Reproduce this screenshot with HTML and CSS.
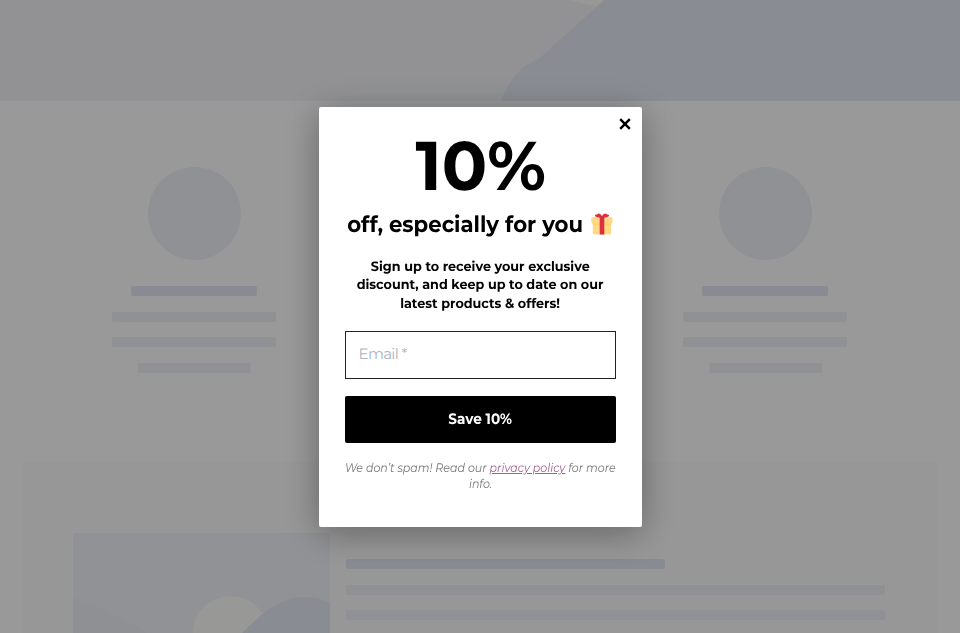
FILE: index.html
```
<!DOCTYPE html>
<html lang="en">
<head>
<meta charset="utf-8">
<title>Newsletter offer</title>
<link rel="stylesheet" href="styles.css">
</head>
<body>
<div class="page">
  <svg class="hero" viewBox="0 0 960 101">
    <path class="sun" d="M570 0H606L597 6Q583 4 570 0Z"/>
    <path class="hill" d="M501 101C506 88 511 79 521 69C526 64 535 62 543 55L604 0H960V101Z"/>
  </svg>
  <div class="features">
    <div class="feature"><i class="avatar"></i><i class="bar title"></i><i class="bar"></i><i class="bar"></i><i class="bar short"></i></div>
    <div class="feature"><i class="avatar"></i><i class="bar title"></i><i class="bar"></i><i class="bar"></i><i class="bar short"></i></div>
    <div class="feature"><i class="avatar"></i><i class="bar title"></i><i class="bar"></i><i class="bar"></i><i class="bar short"></i></div>
  </div>
  <div class="panel">
    <svg class="picture" viewBox="0 0 257 120">
      <path class="slope" d="M0 65C20 70 44 82 73 99L110 120H0Z"/>
      <circle class="sun" cx="157.500" cy="101" r="38"/>
      <path class="hill" d="M150 120L169 100C190 80 206 64 232 64Q246 64 257 70V120Z"/>
    </svg>
    <div class="copy"><i class="bar heading"></i><i class="bar"></i><i class="bar"></i></div>
  </div>
</div>
<div class="overlay">
  <form class="modal">
    <button type="button" class="close" aria-label="Close"><svg viewBox="0 0 12 12"><path d="M1.200 1.200L10.800 10.800M10.800 1.200L1.200 10.800"/></svg></button>
    <h1><span>10%</span></h1>
    <h2><span>off, especially for you</span>
      <svg class="gift" viewBox="0 0 22 22">
        <path fill="#ffd983" d="M1.800 8H20.200V19.500Q20.200 21.500 18.200 21.500H3.800Q1.800 21.500 1.800 19.500Z"/>
        <path fill="#ffcc64" d="M1.800 10H20.200V11.500H1.800Z"/>
        <rect fill="#ffd983" x="0.300" y="4" width="21.400" height="6.500" rx="2"/>
        <path fill="#dd2e44" d="M8.700 4H13.300V21.500H8.700Z"/>
        <path fill="#dd2e44" d="M11 4.800C7 4.800 3.400 4 4 2.200C4.500.8 6 2 6.300 1.200C7-.5 10.300 1 11 3.300C11.700 1 15-.5 15.700 1.200C16 2 17.500.8 18 2.200C18.600 4 15 4.800 11 4.800Z"/>
      </svg>
    </h2>
    <p class="lead"><span>Sign up to receive your exclusive</span><br><span>discount, and keep up to date on our</span><br><span>latest products &amp; offers!</span></p>
    <input type="email" placeholder="Email *">
    <button type="button" class="submit"><span>Save 10%</span></button>
    <p class="note"><span>We don’t spam! Read our <a href="#">privacy policy</a> for more</span><br><span>info.</span></p>
  </form>
</div>
</body>
</html>
```
FILE: styles.css
```
* { box-sizing: border-box; }
body { margin: 0; height: 633px; overflow: hidden; background: #fff; font-family: Montserrat, Inter, sans-serif; text-rendering: geometricPrecision; }
.page { height: 633px; overflow: hidden; }
.hero { display: block; width: 960px; height: 101px; background: #f3f4f7; }
.sun { fill: #fefdfb; }
.hill { fill: #e6eaf5; }
.slope { fill: #eff0f5; }
.features { display: flex; justify-content: space-between; height: 360px; padding: 66px 113px 0 112px; }
.feature { display: flex; flex-direction: column; align-items: center; width: 164px; }
.avatar { width: 93px; height: 93px; border-radius: 50%; background: #f1f2f7; margin-bottom: 26px; }
.bar { display: block; flex: none; width: 100%; height: 10px; margin-bottom: 15.700px; border-radius: 2px; background: #f0f2f7; }
.title { width: 126px; background: #e4e8f4; }
.short { width: 113px; }
.panel { display: flex; gap: 15px; height: 240px; margin: 0 23px 0 22px; padding: 72px 52px 0 51px; background: #fcfcfc; border-radius: 3px; }
.picture { flex: none; width: 257px; height: 120px; background: #f2f3f8; border-radius: 3px; }
.copy { flex: 1; padding: 26px 0 0 1px; }
.heading { width: 319px; background: #e4e8f4; }
.overlay { position: fixed; inset: 0; display: flex; align-items: center; justify-content: center; background: rgba(0,0,0,.4); }
.modal { position: relative; width: 323px; height: 420px; padding: 24px 26px 0; background: #fff; border-radius: 2px; box-shadow: 0 6px 36px rgba(0,0,0,.34); text-align: center; color: #000; }
.modal span { display: inline-block; }
.close { position: absolute; top: 11px; right: 11px; width: 12px; height: 12px; padding: 0; border: 0; background: none; }
.close svg { display: block; width: 12px; height: 12px; fill: none; stroke: #000; stroke-width: 2.500; }
h1 { margin: 0; height: 70px; font-size: 69px; font-weight: 700; line-height: 71px; }
h1 span { transform: translateX(.500px) scaleX(.970); }
h2 { display: flex; justify-content: center; align-items: center; gap: 8px; margin: 8px 0 0; height: 30px; font-size: 22.500px; font-weight: 700; line-height: 30px; white-space: nowrap; }
h2 span { margin: 0 -7px; transform: scaleX(.943); }
.gift { flex: none; width: 22px; height: 22px; }
.lead { margin: 19px -10px 0; font-size: 13.500px; font-weight: 700; line-height: 18.600px; white-space: nowrap; }
.lead span { transform: translateX(.500px) scaleX(.945); }
input { display: block; width: 271px; height: 47.500px; margin: 18.200px 0 0; padding: 0 13px 3px; border: 1px solid #222; border-radius: 0; font: 400 15px Montserrat, Inter, sans-serif; letter-spacing: -.650px; outline: 0; text-rendering: geometricPrecision; }
input::placeholder { color: #a9b5c3; opacity: 1; }
.submit { display: block; width: 271px; height: 47.500px; margin: 17px 0 0; padding: 0 0 2px; border: 0; border-radius: 2px; background: #000; color: #fff; font: 700 15px Montserrat, Inter, sans-serif; text-rendering: geometricPrecision; }
.submit span { transform: scaleX(.905); }
.note { margin: 17.500px -20px 0; font-size: 12.400px; font-style: italic; line-height: 16px; color: #777; white-space: nowrap; }
.note span { transform: translateX(.500px) scaleX(.892); }
a { color: #a0608f; text-decoration: underline; }
```
